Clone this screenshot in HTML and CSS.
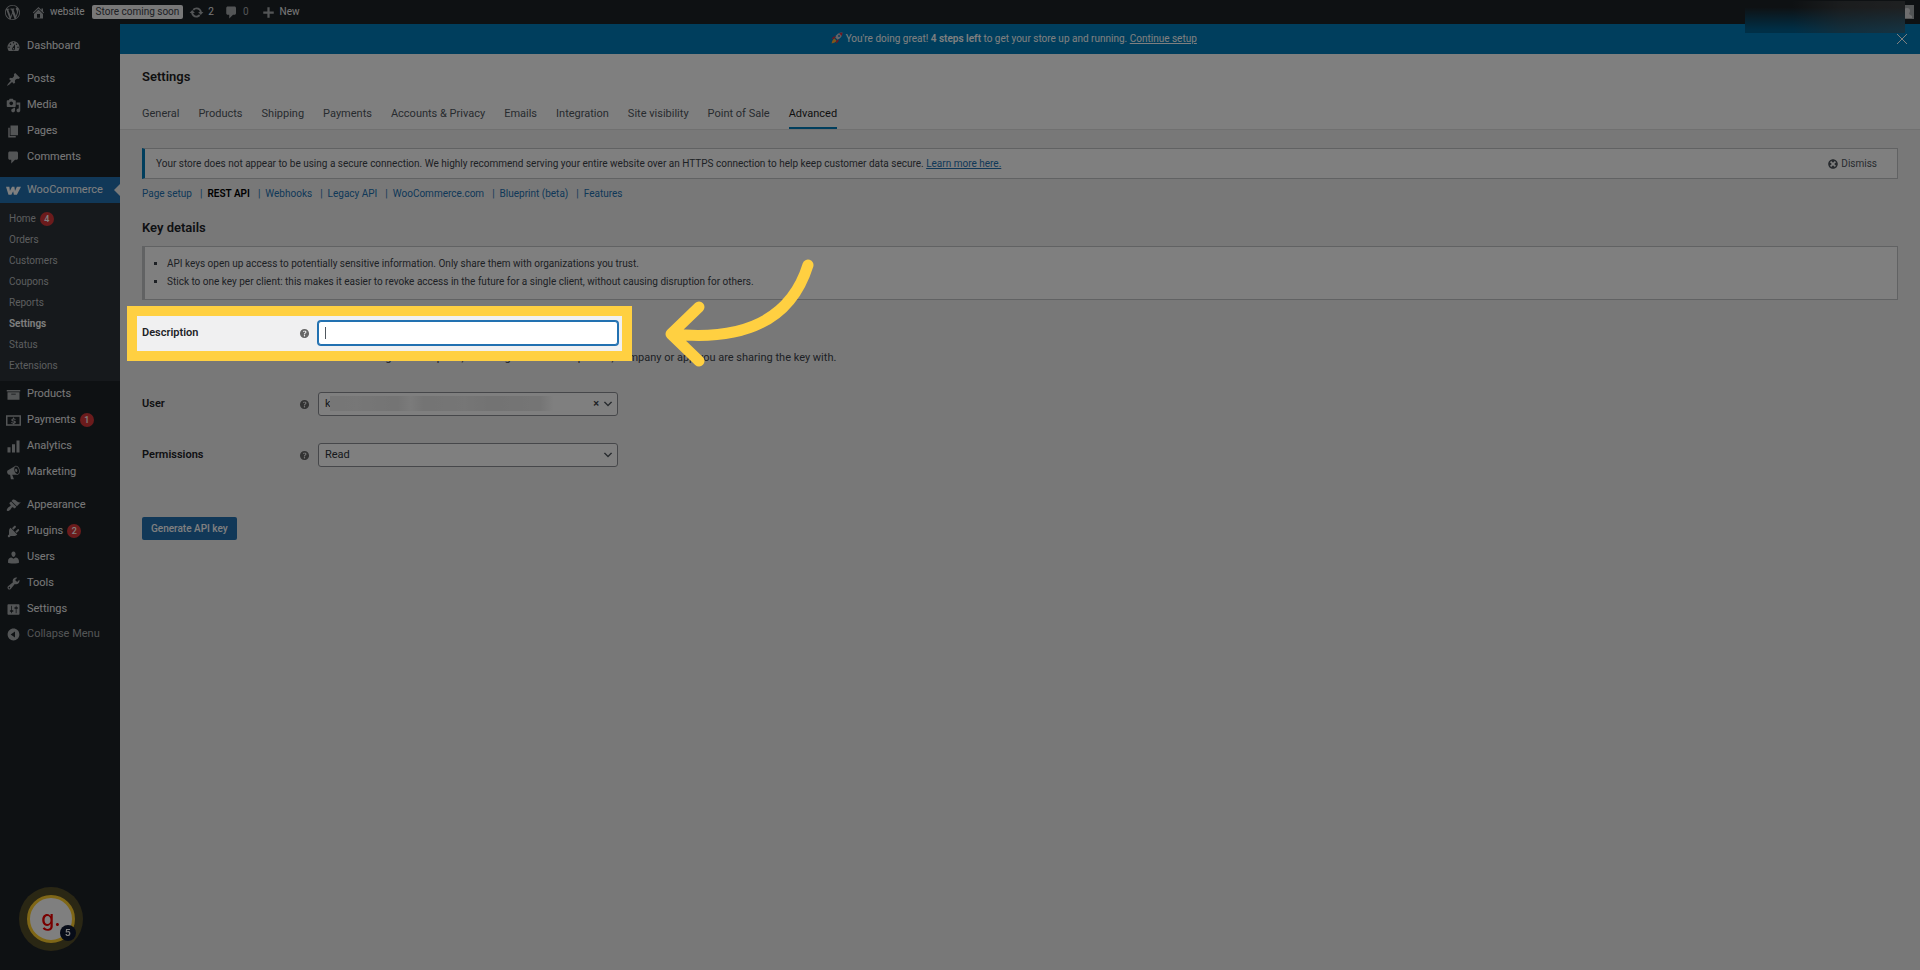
FILE: index.html
```html
<!DOCTYPE html>
<html lang="en">
<head>
    <meta charset="utf-8">
    <title>WooCommerce settings</title>
    <link rel="stylesheet" href="styles.css">
</head>
<body>
<svg class="sprite" aria-hidden="true">
    <symbol id="i-help" viewBox="0 0 20 20"><path d="M17 10c0-3.87-3.14-7-7-7-3.87 0-7 3.13-7 7s3.13 7 7 7c3.86 0 7-3.13 7-7zm-6.3 1.48H9.14v-.43c0-.38.08-.7.24-.98s.46-.57.88-.89c.41-.29.68-.53.81-.71.14-.18.2-.39.2-.62 0-.25-.09-.44-.28-.58-.19-.13-.45-.19-.79-.19-.58 0-1.25.19-2 .57l-.64-1.28c.87-.49 1.8-.74 2.77-.74.81 0 1.45.2 1.92.58.48.39.71.91.71 1.55 0 .43-.09.8-.29 1.11-.19.32-.57.67-1.11 1.06-.38.28-.61.49-.71.63-.1.15-.15.34-.15.57v.35zm-1.47 2.74c-.18-.17-.27-.42-.27-.73 0-.33.08-.58.26-.75s.43-.25.77-.25c.32 0 .57.09.75.26s.27.42.27.74c0 .3-.09.55-.27.72-.18.18-.43.27-.75.27-.33 0-.58-.09-.76-.26z"/></symbol>
    <symbol id="i-comment" viewBox="0 0 20 20"><path d="M5 2h9c1.1 0 2 .9 2 2v7c0 1.1-.9 2-2 2h-2l-5 5v-5H5c-1.1 0-2-.9-2-2V4c0-1.1.9-2 2-2z"/></symbol>
    <symbol id="i-chevron" viewBox="0 0 20 20"><path d="M5 6l5 5 5-5 2 1-7 7-7-7z"/></symbol>
</svg>

<header class="adminbar">
    <a href="#" class="bar-logo" aria-label="About WordPress"><svg viewBox="0 0 20 20"><path d="M20 10c0-5.51-4.49-10-10-10C4.48 0 0 4.49 0 10c0 5.52 4.48 10 10 10 5.51 0 10-4.48 10-10zM7.78 15.37L4.37 6.22c.55-.02 1.17-.08 1.17-.08.5-.06.44-1.13-.06-1.11 0 0-1.45.11-2.37.11-.18 0-.37 0-.58-.01C4.12 2.69 6.87 1.11 10 1.11c2.33 0 4.45.87 6.05 2.34-.68-.11-1.65.39-1.65 1.58 0 .74.45 1.36.9 2.1.35.61.55 1.36.55 2.46 0 1.49-1.4 5-1.4 5l-3.03-8.37c.54-.02.82-.17.82-.17.5-.05.44-1.25-.06-1.22 0 0-1.44.12-2.38.12-.87 0-2.33-.12-2.33-.12-.5-.03-.56 1.2-.06 1.22l.92.08 1.26 3.41zM17.41 10c.24-.64.74-1.87.43-4.25.7 1.29 1.05 2.71 1.05 4.25 0 3.29-1.73 6.24-4.4 7.78.97-2.59 1.94-5.2 2.92-7.78zM6.1 18.09C3.12 16.65 1.11 13.53 1.11 10c0-1.3.23-2.48.72-3.59C3.25 10.3 4.67 14.2 6.1 18.09zm4.03-6.63l2.58 6.98c-.86.29-1.76.45-2.71.45-.79 0-1.57-.11-2.29-.33.81-2.38 1.62-4.74 2.42-7.1z"/></svg></a>
    <a href="#" class="bar-site"><svg viewBox="0 0 20 20"><path d="M16 8.5l1.53 1.53-1.06 1.06L10 4.6l-6.47 6.49-1.06-1.06L10 2.5l4 4v-2h2v4zm-6-2.46l6 5.99V18H4v-5.97zM12 17v-5H8v5h4z"/></svg>website</a>
    <a href="#" class="bar-soon">Store coming soon</a>
    <a href="#" class="bar-updates"><svg viewBox="0 0 20 20"><path d="M10.2 3.28c3.53 0 6.43 2.61 6.92 6h2.08l-3.5 4-3.5-4h2.32c-.45-1.97-2.21-3.45-4.32-3.45-1.45 0-2.73.71-3.54 1.78L4.95 5.66C6.23 4.2 8.11 3.28 10.2 3.28zm-.4 13.44c-3.52 0-6.43-2.61-6.92-6H.8l3.5-4c1.17 1.33 2.33 2.67 3.5 4H5.48c.45 1.97 2.21 3.45 4.32 3.45 1.45 0 2.73-.71 3.54-1.78l1.71 1.95c-1.28 1.46-3.15 2.38-5.25 2.38z"/></svg>2</a>
    <a href="#" class="bar-comments"><svg><use href="#i-comment"/></svg>0</a>
    <a href="#" class="bar-new"><svg viewBox="0 0 20 20"><path d="M8.5 3h3v5.500H17v3h-5.500V17h-3v-5.500H3v-3h5.500z"/></svg>New</a>
    <a href="#" class="bar-user" aria-label="Profile">
        <svg viewBox="0 0 14 14"><path class="pic" d="M0 0h14v14H0z"/><path class="person" d="M7 3c2 0 3 1 3 3 0 1-1 2-1 3l3 2v2H2v-2l3-2c0-1-1-2-1-3 0-2 1-3 3-3z"/></svg>
    </a>
    <div class="redacted"></div>
</header>

<div class="shell">
    <nav class="sidebar">
        <ul class="menu">
            <li><a href="#"><svg viewBox="0 0 20 20"><path d="M3.76 16h12.48c1.1-1.37 1.76-3.11 1.76-5 0-4.42-3.58-8-8-8s-8 3.58-8 8c0 1.89.66 3.63 1.76 5zM10 4c.55 0 1 .45 1 1s-.45 1-1 1-1-.45-1-1 .45-1 1-1zM6 6c.55 0 1 .45 1 1s-.45 1-1 1-1-.45-1-1 .45-1 1-1zm8 0c.55 0 1 .45 1 1s-.45 1-1 1-1-.45-1-1 .45-1 1-1zm-5.37 5.55L12 7v6c0 1.1-.9 2-2 2s-2-.9-2-2c0-.57.24-1.08.63-1.45zM4 10c.55 0 1 .45 1 1s-.45 1-1 1-1-.45-1-1 .45-1 1-1zm12 0c.55 0 1 .45 1 1s-.45 1-1 1-1-.45-1-1 .45-1 1-1zm-5 3c0-.55-.45-1-1-1s-1 .45-1 1 .45 1 1 1 1-.45 1-1z"/></svg>Dashboard</a></li>
        </ul>
        <ul class="menu">
            <li><a href="#"><svg viewBox="0 0 20 20"><path d="M10.44 3.02l1.82-1.82 6.36 6.35-1.83 1.82c-1.05-.68-2.48-.57-3.41.36l-.75.75c-.92.93-1.04 2.35-.35 3.41l-1.83 1.82-2.41-2.41-2.8 2.79c-.42.42-3.38 2.71-3.8 2.29s1.86-3.39 2.28-3.81l2.79-2.79L4.1 9.36l1.83-1.82c1.05.69 2.48.57 3.4-.36l.75-.75c.93-.92 1.05-2.35.36-3.41z"/></svg>Posts</a></li>
            <li><a href="#"><svg viewBox="0 0 20 20"><path d="M13 11V4c0-.55-.45-1-1-1h-1.670L9 1H5L3.670 3H2c-.55 0-1 .45-1 1v7c0 .55.45 1 1 1h10c.55 0 1-.45 1-1zM7 4.500c1.380 0 2.500 1.120 2.500 2.500S8.380 9.500 7 9.500 4.500 8.380 4.500 7 5.620 4.500 7 4.500zM14 6h5v10.500c0 1.380-1.120 2.500-2.500 2.500S14 17.880 14 16.500s1.120-2.500 2.500-2.500c.17 0 .34.02.5.05V9h-3V6zm-4 8.050V13h2v3.500c0 1.380-1.120 2.500-2.500 2.500S7 17.880 7 16.500 8.120 14 9.500 14c.17 0 .34.02.5.05z"/></svg>Media</a></li>
            <li><a href="#"><svg viewBox="0 0 20 20"><path d="M6 15V2h10v13H6zm-1 1h8v2H3V5h2v11z"/></svg>Pages</a></li>
            <li><a href="#"><svg><use href="#i-comment"/></svg>Comments</a></li>
        </ul>
        <ul class="menu">
            <li class="current">
                <a href="#"><svg viewBox="0 0 20 20"><path d="M0 5h4.500l.7 5.500L8 5h3.200l.8 5.500L14.500 5H20l-5.500 10.500h-4l-1-4.500-2.300 4.500H3.300z"/></svg>WooCommerce</a>
                <ul class="submenu">
                    <li><a href="#">Home <span class="count">4</span></a></li>
                    <li><a href="#">Orders</a></li>
                    <li><a href="#">Customers</a></li>
                    <li><a href="#">Coupons</a></li>
                    <li><a href="#">Reports</a></li>
                    <li><a href="#" class="on">Settings</a></li>
                    <li><a href="#">Status</a></li>
                    <li><a href="#">Extensions</a></li>
                </ul>
            </li>
            <li><a href="#"><svg viewBox="0 0 20 20"><path d="M19 4v2H1V4h18zM2 7h16v10H2V7zm11 3V9H7v1h6z"/></svg>Products</a></li>
            <li><a href="#"><svg viewBox="0 0 20 20"><path fill-rule="evenodd" d="M0 3h20v14H0zM2 5v10h16V5z"/><path d="M9.300 6h1.400v1.200c1 .1 1.800.5 2.300 1l-.9 1.100c-.6-.5-1.300-.7-2-.7-.8 0-1.200.2-1.200.6 0 1.100 4.300.3 4.300 2.900 0 1.100-.9 1.900-2.500 2.100V15H9.300v-.9c-1.100-.1-2-.5-2.600-1.100l1-1.100c.7.6 1.400.9 2.300.9.800 0 1.300-.3 1.300-.7 0-1.200-4.200-.4-4.200-2.900 0-1 .8-1.800 2.200-2z"/></svg>Payments <span class="count">1</span></a></li>
            <li><a href="#"><svg viewBox="0 0 20 20"><path d="M2 11h4v7H2zM8 7h4v11H8zM14 2h4v16h-4z"/></svg>Analytics</a></li>
            <li><a href="#"><svg viewBox="0 0 20 20"><path d="M18.150 5.940c.46 1.620.38 3.220-.02 4.480-.42 1.280-1.260 2.180-2.300 2.480-.16.06-.26.06-.4.06-.06.02-.12.02-.18.02-.06.02-.14.02-.22.02h-6.800l2.220 5.500c.02.14-.06.26-.14.34-.08.1-.24.16-.34.16H6.950c-.1 0-.26-.06-.34-.16-.08-.08-.16-.2-.14-.34l-1-5.500H4.250l-.02-.02c-.5.06-1.080-.18-1.540-.62s-.88-1.080-1.060-1.880c-.24-.8-.2-1.560-.02-2.200.18-.62.58-1.080 1.060-1.300l.02-.02 9-5.400c.1-.06.18-.1.24-.16.06-.04.14-.08.24-.12.16-.08.28-.12.5-.18 1.040-.3 2.240.1 3.220.98s1.840 2.240 2.260 3.860zm-2.580 5.980h-.02c.4-.1.74-.34 1.040-.7.58-.7.86-1.760.86-3.040 0-.64-.1-1.300-.28-1.980-.34-1.360-1.020-2.500-1.780-3.240s-1.680-1.100-2.460-.88c-.82.22-1.400.96-1.700 2-.32 1.040-.28 2.360.06 3.720.38 1.360 1 2.500 1.800 3.240.78.74 1.620 1.100 2.480.88zm-2.540-7.080c.22-.04.42-.02.62.04.38.16.76.48 1.020 1s.42 1.200.42 1.780c0 .3-.04.56-.12.8-.18.48-.44.84-.86.94-.34.1-.8-.06-1.140-.4s-.64-.86-.78-1.500c-.18-.62-.12-1.240.02-1.720s.48-.84.82-.94z"/></svg>Marketing</a></li>
        </ul>
        <ul class="menu">
            <li><a href="#"><svg viewBox="0 0 20 20"><path d="M14.480 11.060L7.410 3.990l1.500-1.500c.5-.56 2.300-.47 3.510.32 1.210.8 1.430 1.280 2.910 2.100 1.180.64 2.450 1.260 4.450.85zm-.71.71L6.700 4.700 4.930 6.470c-.39.39-.39 1.020 0 1.410l1.060 1.060c.39.39.39 1.030 0 1.420-.6.6-1.430 1.110-2.210 1.690-.35.26-.7.53-1.010.84C1.430 14.230.4 16.080 1.400 17.070c.99 1 2.840-.03 4.180-1.360.31-.31.58-.66.85-1.020.57-.78 1.080-1.610 1.690-2.210.39-.39 1.020-.39 1.410 0l1.060 1.060c.39.39 1.020.39 1.410 0z"/></svg>Appearance</a></li>
            <li><a href="#"><svg viewBox="0 0 20 20"><path d="M13.110 4.360L9.870 7.600 8 5.730l3.240-3.240c.35-.34 1.050-.2 1.560.32.52.51.66 1.210.31 1.550zm-8 1.770l.91-1.120 9.010 9.010-1.190.84c-.71.71-2.630 1.160-3.820 1.160H6.140L4.900 17.260c-.59.59-1.540.59-2.120 0-.59-.58-.59-1.530 0-2.120l1.240-1.240v-3.880c0-1.130.4-3.190 1.090-3.890zm7.260 3.970l3.240-3.240c.34-.35 1.040-.21 1.550.31.52.51.66 1.210.31 1.550l-3.240 3.250z"/></svg>Plugins <span class="count">2</span></a></li>
            <li><a href="#"><svg viewBox="0 0 20 20"><path d="M10 9.250c-2.270 0-2.730-3.440-2.730-3.440C7 4.020 7.820 2 9.970 2c2.160 0 2.980 2.020 2.710 3.810 0 0-.41 3.440-2.680 3.440zm0 2.570L12.720 10c2.390 0 4.520 2.330 4.520 4.530v2.490s-3.650 1.130-7.240 1.130c-3.650 0-7.240-1.130-7.240-1.130v-2.490c0-2.250 1.940-4.480 4.470-4.480z"/></svg>Users</a></li>
            <li><a href="#"><svg viewBox="0 0 20 20"><path d="M16.680 9.770c-1.340 1.340-3.300 1.670-4.950.99l-5.410 6.520c-.99.99-2.590.99-3.580 0s-.99-2.590 0-3.570l6.520-5.420c-.68-1.650-.35-3.610.99-4.950 1.280-1.280 3.120-1.620 4.720-1.060l-2.890 2.890 2.820 2.820 2.860-2.870c.53 1.580.18 3.390-1.080 4.650zM3.810 16.210c.4.39 1.040.39 1.430 0 .4-.4.4-1.040 0-1.430-.39-.4-1.030-.4-1.430 0-.39.39-.39 1.030 0 1.430z"/></svg>Tools</a></li>
            <li><a href="#"><svg viewBox="0 0 20 20"><path d="M18 16V4c0-.55-.45-1-1-1H3c-.55 0-1 .45-1 1v12c0 .55.45 1 1 1h14c.55 0 1-.45 1-1zM8 11h1c.55 0 1 .45 1 1s-.45 1-1 1H8v1.500c0 .28-.22.5-.5.5s-.5-.22-.5-.5V13H6c-.55 0-1-.45-1-1s.45-1 1-1h1V5.500c0-.28.22-.5.5-.5s.5.22.5.5V11zm5-2h-1c-.55 0-1-.45-1-1s.45-1 1-1h1V5.500c0-.28.22-.5.5-.5s.5.22.5.5V7h1c.55 0 1 .45 1 1s-.45 1-1 1h-1v5.500c0 .28-.22.5-.5.5s-.5-.22-.5-.5V9z"/></svg>Settings</a></li>
            <li><button type="button" class="collapse"><svg viewBox="0 0 20 20"><path d="M10 2.160c4.330 0 7.840 3.510 7.840 7.840s-3.510 7.840-7.840 7.840S2.160 14.330 2.160 10 5.710 2.160 10 2.160zm2 11.720V6.120L6.180 9.970z"/></svg>Collapse Menu</button></li>
        </ul>
    </nav>

    <main class="content">
        <div class="banner">
            <p>
                <svg viewBox="0 0 20 20"><path fill="#c5cbd2" d="M19 1c-6 0-10 3-12 8l4 4c5-2 8-6 8-12z"/><path fill="#dd2e44" d="M19 1c-2 0-4 .3-5.500 1L18 6.500C18.700 5 19 3 19 1zM8 7C5 7 3 8 1 12l5-1zm5 5c0 3-1 5-5 7l1-5z"/><circle cx="13.500" cy="6.500" r="2" fill="#3b88c3"/><path fill="#ffac33" d="M6 11c-3 1-4 4-5 8 4-1 7-2 8-5z"/></svg>
                You're doing great! <b>4 steps left</b> to get your store up and running. <a href="#">Continue setup</a>
            </p>
            <button type="button" aria-label="Close"><svg viewBox="0 0 12 12"><path d="M1 1l10 10M11 1L1 11"/></svg></button>
        </div>

        <div class="page-head">
            <h1>Settings</h1>
            <nav class="tabs">
                <a href="#">General</a>
                <a href="#">Products</a>
                <a href="#">Shipping</a>
                <a href="#">Payments</a>
                <a href="#">Accounts &amp; Privacy</a>
                <a href="#">Emails</a>
                <a href="#">Integration</a>
                <a href="#">Site visibility</a>
                <a href="#">Point of Sale</a>
                <a href="#" class="on">Advanced</a>
            </nav>
        </div>

        <div class="wrap">
            <div class="notice notice-info">
                <p>Your store does not appear to be using a secure connection. We highly recommend serving your entire website over an HTTPS connection to help keep customer data secure. <a href="#">Learn more here.</a></p>
                <button type="button"><svg viewBox="0 0 20 20"><path d="M10 2c4.420 0 8 3.580 8 8s-3.580 8-8 8-8-3.580-8-8 3.580-8 8-8zm5 11l-3-3 3-3-2-2-3 3-3-3-2 2 3 3-3 3 2 2 3-3 3 3z"/></svg>Dismiss</button>
            </div>

            <ul class="subnav">
                <li><a href="#">Page setup</a></li>
                <li><a href="#" class="on">REST API</a></li>
                <li><a href="#">Webhooks</a></li>
                <li><a href="#">Legacy API</a></li>
                <li><a href="#">WooCommerce.com</a></li>
                <li><a href="#">Blueprint (beta)</a></li>
                <li><a href="#">Features</a></li>
            </ul>

            <h2>Key details</h2>
            <div class="notice notice-list">
                <ul>
                    <li>API keys open up access to potentially sensitive information. Only share them with organizations you trust.</li>
                    <li>Stick to one key per client: this makes it easier to revoke access in the future for a single client, without causing disruption for others.</li>
                </ul>
            </div>

            <form>
                <div class="field field-description">
                    <label for="description">Description</label>
                    <svg class="help"><use href="#i-help"/></svg>
                    <div class="control focused"><input type="text" id="description"></div>
                    <p class="hint">Add a meaningful description, including a note of the person, company or app you are sharing the key with.</p>
                    <div class="spotlight"></div>
                    <svg class="arrow" viewBox="0 0 160 116"><path d="M148 10C130 68 80 86 12 79M39 52L11 79l28 27"/></svg>
                </div>
                <div class="field">
                    <label for="user">User</label>
                    <svg class="help"><use href="#i-help"/></svg>
                    <div class="control">
                        <select id="user"><option>k</option></select>
                        <span class="smear"></span>
                        <button type="button" class="clear" aria-label="Clear">×</button>
                        <svg class="chevron"><use href="#i-chevron"/></svg>
                    </div>
                </div>
                <div class="field">
                    <label for="permissions">Permissions</label>
                    <svg class="help"><use href="#i-help"/></svg>
                    <div class="control">
                        <select id="permissions"><option>Read</option><option>Write</option><option>Read/Write</option></select>
                        <svg class="chevron"><use href="#i-chevron"/></svg>
                    </div>
                </div>
                <button type="submit" class="submit">Generate API key</button>
            </form>
        </div>
    </main>
</div>

<button type="button" class="bubble">g.<span>5</span></button>
</body>
</html>
```
FILE: styles.css
```css
* {
    box-sizing: border-box;
    margin: 0;
    padding: 0;
}

body {
    background: #f0f0f1;
    color: #3c434a;
    font-family: Roboto, "Liberation Sans", sans-serif;
    font-size: 10px;
    line-height: 18px;
}

ul {
    list-style: none;
}

a {
    color: #2271b1;
}

button,
input,
select {
    font: inherit;
    color: inherit;
}

button {
    border: 0;
    background: none;
    cursor: pointer;
}

svg {
    flex: none;
    fill: currentColor;
}

.sprite {
    display: none;
}

/* admin bar */
.adminbar {
    position: relative;
    display: flex;
    align-items: center;
    height: 24px;
    padding: 0 6px 0 5px;
    background: #1d2327;
}

.adminbar a {
    display: flex;
    align-items: center;
    gap: 4px;
    color: #f0f0f1;
    font-size: 10px;
    text-decoration: none;
}

.adminbar svg {
    width: 15px;
    height: 15px;
    fill: #a7aaad;
}

.adminbar .bar-site {
    margin-left: 11px;
}

.adminbar .bar-soon {
    margin: 0 6px 0 7px;
    padding: 0 4px;
    border-radius: 2px;
    background: #f0f0f1;
    color: #3c434a;
    line-height: 14px;
}

.adminbar .bar-comments {
    margin-left: 10px;
    color: #a7aaad;
}

.adminbar .bar-new {
    margin-left: 12px;
}

.adminbar .bar-user {
    margin-left: auto;
}

.adminbar .bar-user svg {
    width: 14px;
    height: 14px;
}

.adminbar .pic {
    fill: #a7aaad;
}

.adminbar .person {
    fill: #dcdcde;
}

.redacted {
    position: absolute;
    top: 1px;
    right: 15px;
    width: 160px;
    height: 32px;
    background:
        linear-gradient(to right, transparent 30%, rgba(90, 90, 90, .4) 60%, rgba(110, 110, 110, .4)),
        linear-gradient(#1d2327 20%, #005e8d 90%);
}

/* side menu */
.shell {
    display: flex;
    min-height: calc(100vh - 24px);
}

.sidebar {
    flex: none;
    width: 120px;
    padding-top: 9px;
    background: #1d2327;
}

.menu {
    margin-bottom: 7px;
}

.menu > li > a,
.collapse {
    position: relative;
    display: flex;
    align-items: center;
    height: 26px;
    padding-left: 6px;
    color: #f0f0f1;
    font-size: 11px;
    text-decoration: none;
}

.menu > li > a svg,
.collapse svg {
    width: 15px;
    height: 15px;
    margin-right: 6px;
    fill: #a7aaad;
}

.menu .current > a {
    background: #2271b1;
    color: #fff;
}

.menu .current > a svg {
    fill: #fff;
}

.menu .current > a::after {
    content: "";
    position: absolute;
    top: 7px;
    right: 0;
    border: 6px solid transparent;
    border-left: 0;
    border-right-color: #f0f0f1;
}

.menu .collapse {
    height: 24px;
    color: #a7aaad;
}

.submenu {
    padding: 5px 0;
    background: #2c3338;
}

.submenu a {
    display: flex;
    align-items: center;
    height: 21px;
    padding-left: 9px;
    color: #b9bbbe;
    text-decoration: none;
}

.submenu .on {
    color: #fff;
    font-weight: 600;
}

.count {
    width: 14px;
    height: 14px;
    margin-left: 4px;
    border-radius: 50%;
    background: #d63638;
    color: #fff;
    font-size: 9px;
    font-weight: 500;
    line-height: 14px;
    text-align: center;
}

/* content */
.content {
    flex: 1;
    min-width: 0;
}

.banner {
    display: flex;
    align-items: center;
    height: 30px;
    padding: 0 12px;
    background: #007cba;
    color: #fff;
}

.banner p {
    flex: 1;
    text-align: center;
}

.banner p svg {
    width: 12px;
    height: 12px;
    vertical-align: -2px;
}

.banner a {
    color: #fff;
}

.banner b,
.subnav .on {
    font-weight: 600;
}

.banner button svg {
    display: block;
    width: 12px;
    height: 12px;
    fill: none;
    stroke: #fff;
}

.page-head {
    padding: 14px 22px 0;
    border-bottom: 1px solid #e0e0e0;
    background: #fff;
}

h1 {
    color: #1e1e1e;
    font-size: 13px;
    font-weight: 600;
}

.tabs {
    display: flex;
    gap: 19px;
    margin-top: 12px;
}

.tabs a {
    padding: 7px 0 4px;
    border-bottom: 2px solid transparent;
    color: #50575e;
    font-size: 11px;
    text-decoration: none;
}

.tabs .on {
    border-color: #007cba;
    color: #1e1e1e;
}

.wrap {
    padding: 18px 22px;
}

.notice {
    border: 1px solid #c3c4c7;
    border-left-width: 3px;
    background: #fff;
}

.notice-info {
    display: flex;
    align-items: center;
    justify-content: space-between;
    height: 31px;
    padding: 0 20px 0 11px;
    border-left-color: #007cba;
}

.notice-info button {
    display: flex;
    align-items: center;
    gap: 2px;
    color: #50575e;
}

.notice-info button svg {
    width: 12px;
    height: 12px;
}

.subnav {
    display: flex;
    gap: 8px;
    margin-top: 6px;
    color: #2271b1;
}

.subnav li + li::before {
    content: "|";
    margin-right: 5px;
}

.subnav a {
    text-decoration: none;
}

.subnav .on {
    color: #000;
}

h2 {
    margin: 16px 0 9px;
    color: #1d2327;
    font-size: 13px;
    font-weight: 600;
}

.notice-list ul {
    padding: 8px 22px;
    list-style: square;
}

/* key form */
form {
    padding-top: 21px;
}

.field {
    position: relative;
    display: grid;
    grid-template-columns: 156px 20px 300px;
    align-items: center;
    margin-bottom: 27px;
}

.field label {
    color: #1d2327;
    font-size: 11px;
    font-weight: 600;
}

.field .help {
    width: 13px;
    height: 13px;
    color: #666;
}

.control {
    position: relative;
    height: 24px;
}

.control input,
.control select {
    width: 100%;
    height: 24px;
    padding: 0 6px;
    border: 1px solid #8c8f94;
    border-radius: 3px;
    background: #fff;
    color: #2c3338;
    font-size: 11px;
    appearance: none;
}

.focused input {
    border-color: #2271b1;
    outline: 0;
    box-shadow: 0 0 0 1px #2271b1;
}

.focused::after {
    content: "";
    position: absolute;
    top: 6px;
    left: 7px;
    width: 1px;
    height: 12px;
    background: #50575e;
}

.chevron {
    position: absolute;
    top: 6px;
    right: 4px;
    width: 12px;
    height: 12px;
    color: #50575e;
    pointer-events: none;
}

.clear {
    position: absolute;
    top: 3px;
    right: 19px;
    font-size: 11px;
    font-weight: 600;
}

.smear {
    position: absolute;
    top: 4px;
    left: 12px;
    width: 224px;
    height: 15px;
    background: linear-gradient(to right, #ececec, #eee 12%, #e8e8e8 30%, #f6f6f6 36%, #e8e8e8 42%, #ececec 60%, #e6e6e6 72%, #ebebeb 94%, #fff);
}

.hint {
    grid-column: 3 / 4;
    font-size: 11px;
    white-space: nowrap;
}

.field-description {
    row-gap: 4px;
    margin-bottom: 25px;
}

/* yellow frame, its shadow dims everything round it */
.spotlight {
    position: absolute;
    top: -15px;
    left: -15px;
    z-index: 10;
    width: 505px;
    height: 55px;
    border: 10px solid #ffd041;
    box-shadow: 0 0 0 2000px rgba(0, 0, 0, .5);
    pointer-events: none;
}

.arrow {
    position: absolute;
    top: -66px;
    left: 518px;
    z-index: 11;
    width: 160px;
    height: 116px;
    fill: none;
    stroke: #ffd041;
    stroke-width: 11;
    stroke-linecap: round;
    stroke-linejoin: round;
}

.submit {
    height: 23px;
    margin-top: 23px;
    padding: 0 9px;
    border-radius: 2px;
    background: #2271b1;
    color: #fff;
    font-weight: 500;
}

/* helper bubble */
.bubble {
    position: fixed;
    bottom: 27px;
    left: 27px;
    width: 48px;
    height: 48px;
    border: 3px solid #ffce2e;
    border-radius: 50%;
    background: #fff;
    box-shadow: 0 0 0 8px rgba(255, 206, 46, .25);
    color: #f00000;
    font-family: Inter, sans-serif;
    font-size: 21px;
    font-weight: 500;
    line-height: 30px;
}

.bubble span {
    position: absolute;
    right: -4px;
    bottom: -1px;
    width: 16px;
    height: 16px;
    border-radius: 50%;
    background: #0e1830;
    color: #fff;
    font-size: 9px;
    font-weight: 700;
    line-height: 16px;
}
```
